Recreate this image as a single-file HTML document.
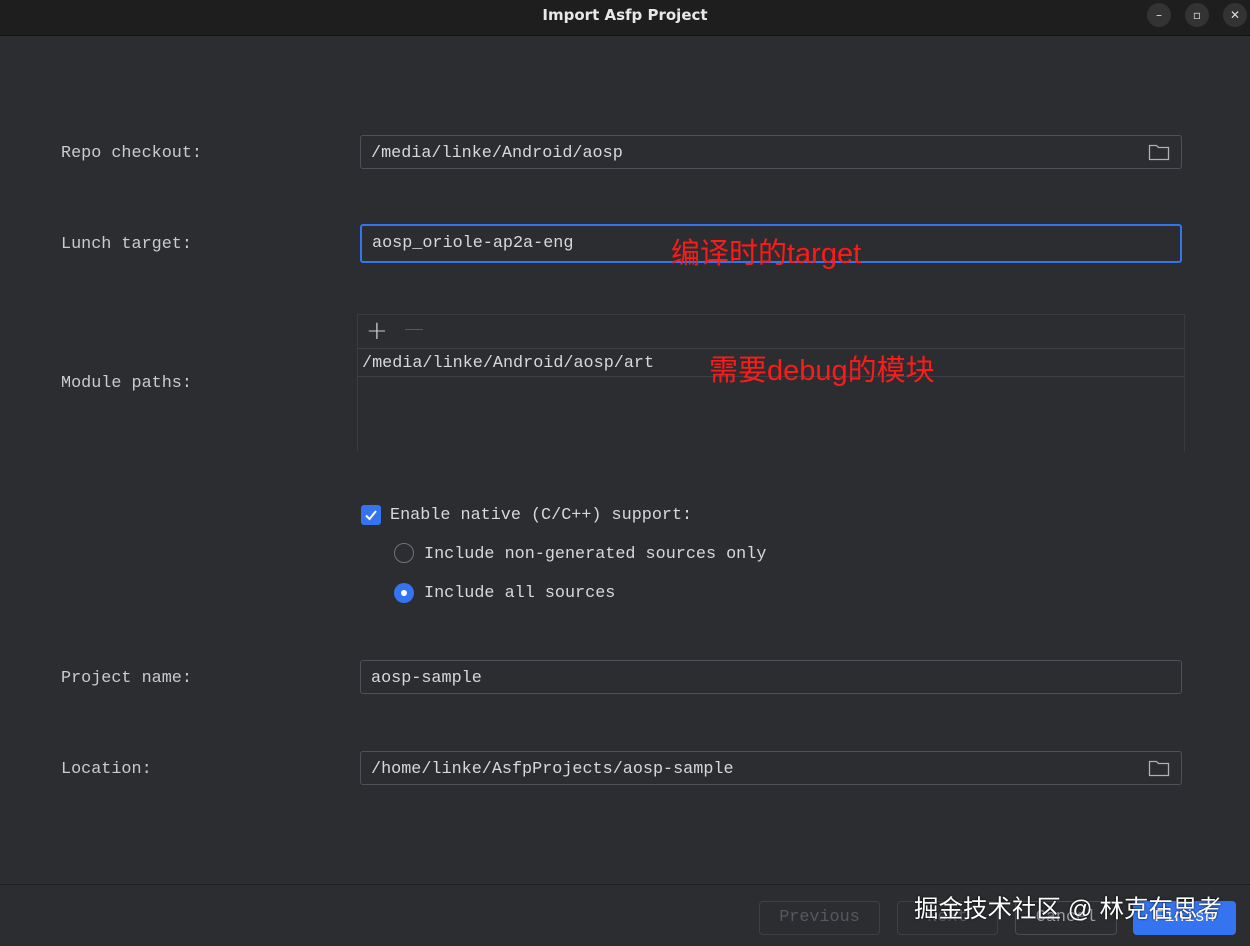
<!DOCTYPE html>
<html><head><meta charset="utf-8"><style>
*{margin:0;padding:0;box-sizing:border-box}
body{width:1250px;height:946px;background:#2b2d30;position:relative;overflow:hidden;font-family:"Liberation Mono",monospace;font-size:16.8px;color:#d6d8dc}
.abs{position:absolute}
.title{left:0;top:0;width:1250px;height:36px;background:#1e1e1e;border-bottom:1px solid #111}
.title span{position:absolute;left:0;width:1250px;top:6px;text-align:center;font-family:"DejaVu Sans",sans-serif;font-weight:bold;font-size:15px;color:#e8e8e8}
.wb{width:24px;height:24px;border-radius:12px;background:#333;top:3px;color:#ddd;font-family:"DejaVu Sans",sans-serif;font-size:12px;text-align:center;line-height:24px}
.lbl{left:61px;color:#c9cbcf}
.field{left:360px;width:822px;height:34px;border:1px solid #4e5157;border-radius:3px;background:#2b2d30;padding:8px 10px 0}
.red{color:#ff1a1a;font-family:"Liberation Sans","Noto Sans CJK SC",sans-serif;font-size:29px}
.btn{top:901px;height:34px;border:1px solid #3e4045;border-radius:4px;text-align:center;line-height:32px;color:#55585e}
</style></head><body>
<div class="abs title"><span>Import Asfp Project</span></div>
<div class="abs wb" style="left:1147px">–</div>
<div class="abs wb" style="left:1185px">▫</div>
<div class="abs wb" style="left:1223px">✕</div>

<div class="abs lbl" style="top:144px">Repo checkout:</div>
<div class="abs field" style="top:135px">/media/linke/Android/aosp</div>
<svg class="abs" style="left:1148px;top:143px" width="22" height="18" viewBox="0 0 22 18"><path d="M1.5 2.5h7l2 2h10v12h-19z" fill="none" stroke="#aeb1b6" stroke-width="1.3"/></svg>

<div class="abs lbl" style="top:235px">Lunch target:</div>
<div class="abs field" style="top:224px;height:39px;border:2px solid #3574f0;padding:8px 10px 0">aosp_oriole-ap2a-eng</div>
<div class="abs red" style="left:671px;top:230px">编译时的target</div>

<div class="abs lbl" style="top:374px">Module paths:</div>
<div class="abs" style="left:357px;top:314px;width:828px;height:138px;border:1px solid #393b40;border-bottom:none;background:#2b2d30"></div>
<div class="abs" style="left:358px;top:348px;width:826px;height:1px;background:#3c3f44"></div>
<div class="abs" style="left:358px;top:376px;width:826px;height:1px;background:#3c3f44"></div>
<div class="abs" style="left:366px;top:316px;font-size:26px;color:#ccc;font-family:'DejaVu Sans',sans-serif;font-weight:200">+</div>
<div class="abs" style="left:405px;top:329px;width:18px;height:1px;background:#55585d"></div>
<div class="abs" style="left:362px;top:354px">/media/linke/Android/aosp/art</div>
<div class="abs red" style="left:709px;top:347px">需要debug的模块</div>

<div class="abs" style="left:361px;top:505px;width:20px;height:20px;border-radius:3px;background:#3574f0"></div>
<svg class="abs" style="left:361px;top:505px" width="20" height="20"><path d="M5 10.5l3.5 3.5 6.5-8" fill="none" stroke="#fff" stroke-width="2"/></svg>
<div class="abs" style="left:390px;top:506px">Enable native (C/C++) support:</div>
<div class="abs" style="left:394px;top:543px;width:20px;height:20px;border-radius:10px;border:1.5px solid #6f737a"></div>
<div class="abs" style="left:424px;top:545px">Include non-generated sources only</div>
<div class="abs" style="left:394px;top:583px;width:20px;height:20px;border-radius:10px;background:#3574f0"></div>
<div class="abs" style="left:401px;top:590px;width:6px;height:6px;border-radius:3px;background:#fff"></div>
<div class="abs" style="left:424px;top:584px">Include all sources</div>

<div class="abs lbl" style="top:669px">Project name:</div>
<div class="abs field" style="top:660px">aosp-sample</div>
<div class="abs lbl" style="top:760px">Location:</div>
<div class="abs field" style="top:751px">/home/linke/AsfpProjects/aosp-sample</div>
<svg class="abs" style="left:1148px;top:759px" width="22" height="18" viewBox="0 0 22 18"><path d="M1.5 2.5h7l2 2h10v12h-19z" fill="none" stroke="#aeb1b6" stroke-width="1.3"/></svg>

<div class="abs" style="left:0;top:884px;width:1250px;height:1px;background:#1e1f22"></div>
<div class="abs btn" style="left:759px;width:121px">Previous</div>
<div class="abs btn" style="left:897px;width:101px">Next</div>
<div class="abs btn" style="left:1015px;width:102px;color:#9a9da2;border-color:#4a4d52">Cancel</div>
<div class="abs btn" style="left:1133px;width:103px;background:#3574f0;border-color:#3574f0;color:#fff">Finish</div>
<div class="abs" style="left:914px;top:890px;font-family:'Liberation Sans','Noto Sans CJK SC',sans-serif;font-size:24.5px;color:#fff;text-shadow:0 0 2px #000">掘金技术社区 @ 林克在思考</div>
</body></html>
